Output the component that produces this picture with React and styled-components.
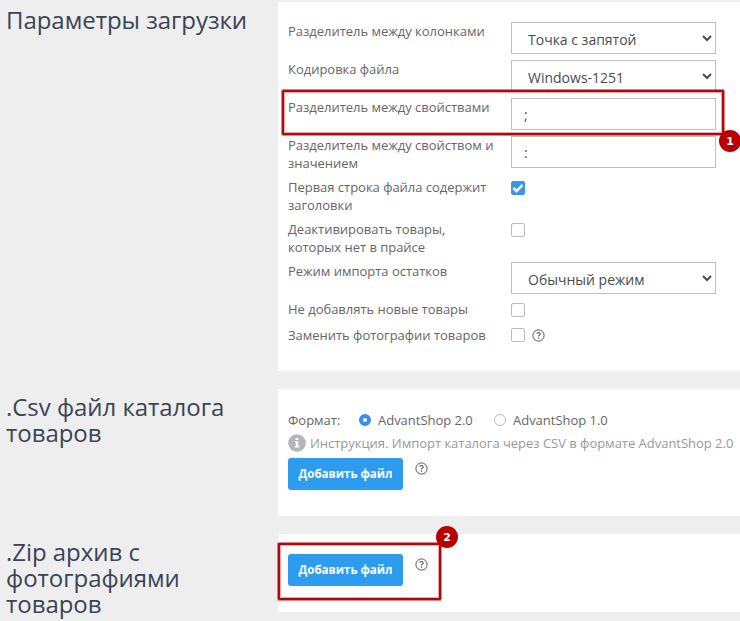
import React from 'react';
import styled, { createGlobalStyle } from 'styled-components';

const GlobalStyle = createGlobalStyle`
  *, *::before, *::after { box-sizing: border-box; }
  html, body { margin: 0; background: #eee; overflow: hidden; }
  body, input, select, button { font-family: 'Open Sans', 'Noto Sans', sans-serif; }
`;

const Page = styled.main`
  position: relative;
  width: 740px;
  height: 621px;
  padding-top: 2px;
  display: flex;
  flex-direction: column;
  gap: 18px;
  overflow: hidden;
  background: #eee;
  color: #666;
  font-size: 13px;
  line-height: 18px;
  letter-spacing: -0.02px;
`;

const Section = styled.section`
  flex: none;
  display: grid;
  grid-template-columns: 278px 462px;
  grid-template-rows: 100%;
  height: ${(p) => p.$height}px;
`;

const Title = styled.h2`
  margin: 0;
  padding: 5px 30px 0 6px;
  color: #3a4456;
  font-size: 24px;
  font-weight: 400;
  line-height: 26px;
  letter-spacing: -0.04px;
`;

const Panel = styled.div`
  padding: 20px 0 0 10px;
  background: #fff;
`;

const Row = styled.div`
  display: grid;
  grid-template-columns: 223px 205px;
  height: ${(p) => p.$height}px;
`;

const Label = styled.label`
  width: 210px;
`;

const Select = styled.select`
  width: 205px;
  height: 32px;
  padding: 3px 0 0 12px;
  border: 1px solid #bfbfbf;
  border-radius: 0;
  background-color: #fff;
  color: #484c51;
  font-size: 14px;
`;

const TextInput = styled.input`
  width: 205px;
  height: 32px;
  padding: 1px 12px 0;
  border: 1px solid #bfbfbf;
  background: #fff;
  color: #484c51;
  font-size: 14px;
`;

const CheckCell = styled.div`
  display: flex;
  align-items: flex-start;
  gap: 7px;
  padding-top: ${(p) => p.$top ?? 3}px;
`;

const Box = styled.span`
  display: flex;
  width: 14px;
  height: 14px;
  border: 1px solid ${(p) => (p.$on ? '#3b95ee' : '#bbb')};
  border-radius: 2px;
  background: ${(p) => (p.$on ? '#3b95ee' : '#fff')};
`;

const FormatRow = styled.div`
  display: flex;
  align-items: center;
  height: 20px;
  margin-top: 1px;
`;

const FormatName = styled.span`
  width: 71px;
`;

const Option = styled.label`
  display: flex;
  align-items: center;
  gap: 7px;
  width: 135px;
  white-space: nowrap;
`;

const Radio = styled.span`
  width: 12px;
  height: 12px;
  border: ${(p) => (p.$on ? '4px solid #3b8eed' : '1px solid #bbb')};
  border-radius: 50%;
  background: #fff;
`;

const Instruction = styled.div`
  display: flex;
  align-items: center;
  gap: 4px;
  height: 18px;
  margin: 4px 0 6px;
  color: #999;
  white-space: nowrap;
`;

const Actions = styled.div`
  display: flex;
  align-items: flex-start;
  gap: 12px;
`;

const HelpSlot = styled.span`
  display: flex;
  padding-top: ${(p) => p.$top ?? 0}px;
`;

const UploadButton = styled.button`
  width: 115px;
  height: 32px;
  padding: 0 0 1px;
  border: 0;
  border-radius: 3px;
  background: #2d9cee;
  color: #fff;
  font-size: 11.5px;
  font-weight: 700;
  white-space: nowrap;
`;

const Highlight = styled.div`
  position: absolute;
  left: ${(p) => p.$x}px;
  top: ${(p) => p.$y}px;
  width: ${(p) => p.$w}px;
  height: ${(p) => p.$h}px;
  border: 2px solid #a80c0c;
  border-radius: 1px;
  box-shadow: 0 0 0 1px rgba(205, 30, 30, 0.55), inset 0 0 0 1px rgba(205, 30, 30, 0.4);
`;

const Marker = styled.span`
  position: absolute;
  left: ${(p) => p.$x}px;
  top: ${(p) => p.$y}px;
  width: 22px;
  height: 22px;
  border-radius: 50%;
  background: #b90000;
  color: #fff;
  font: 700 11px/23px 'DejaVu Sans', sans-serif;
  text-align: center;
`;

function Help() {
  return (
    <svg width="13" height="13" viewBox="0 0 13 13" fill="none" stroke="#555">
      <circle cx="6.5" cy="6.5" r="5.6" strokeWidth="1" />
      <path d="M4.9 5.1c0-1 .6-1.6 1.6-1.6s1.7.6 1.7 1.4c0 1.1-1.6 1.2-1.6 2.7" strokeWidth="1.1" />
      <path d="M6.6 8.5v1.2" strokeWidth="1.2" />
    </svg>
  );
}

function Info() {
  return (
    <svg width="18" height="18" viewBox="0 0 18 18">
      <circle cx="9" cy="9" r="8.8" fill="#b3b6b9" />
      <path d="M7.6 4h2.7v2H7.6zM6.9 7.2h3.4v5h1v1.4H6.8v-1.4h1V8.6h-.9z" fill="#fff" />
    </svg>
  );
}

function Checkbox({ checked }) {
  return (
    <Box $on={checked} role="checkbox" aria-checked={!!checked}>
      {checked && (
        <svg width="12" height="12" viewBox="0 0 12 12" fill="none">
          <path d="M1.3 6l3.2 3 6.1-6.2" stroke="#fff" strokeWidth="2.4" />
        </svg>
      )}
    </Box>
  );
}

function SelectRow({ label, value }) {
  return (
    <Row $height={38}>
      <Label>{label}</Label>
      <Select defaultValue={value} aria-label={label}>
        <option>{value}</option>
      </Select>
    </Row>
  );
}

function InputRow({ label, value, height }) {
  return (
    <Row $height={height}>
      <Label>{label}</Label>
      <TextInput defaultValue={value} aria-label={label} />
    </Row>
  );
}

function CheckRow({ label, checked, height, top, children }) {
  return (
    <Row $height={height}>
      <Label>{label}</Label>
      <CheckCell $top={top}>
        <Checkbox checked={checked} />
        {children}
      </CheckCell>
    </Row>
  );
}

export default function App() {
  return (
    <>
      <GlobalStyle />
      <Page>
        <Section $height={369}>
          <Title>Параметры загрузки</Title>
          <Panel>
            <SelectRow label="Разделитель между колонками" value="Точка с запятой" />
            <SelectRow label="Кодировка файла" value="Windows-1251" />
            <InputRow label="Разделитель между свойствами" value=";" height={38} />
            <InputRow label="Разделитель между свойством и значением" value=":" height={42} />
            <CheckRow label="Первая строка файла содержит заголовки" checked height={42} />
            <CheckRow label="Деактивировать товары, которых нет в прайсе" height={42} />
            <SelectRow label="Режим импорта остатков" value="Обычный режим" />
            <CheckRow label="Не добавлять новые товары" height={26} />
            <CheckRow label="Заменить фотографии товаров" height={26} top={2}>
              <HelpSlot $top={1}><Help /></HelpSlot>
            </CheckRow>
          </Panel>
        </Section>

        <Section $height={127}>
          <Title>.Csv файл каталога товаров</Title>
          <Panel>
            <FormatRow>
              <FormatName>Формат:</FormatName>
              <Option><Radio $on />AdvantShop 2.0</Option>
              <Option><Radio />AdvantShop 1.0</Option>
            </FormatRow>
            <Instruction>
              <Info />
              <span>Инструкция. Импорт каталога через CSV в формате AdvantShop 2.0</span>
            </Instruction>
            <Actions>
              <UploadButton>Добавить файл</UploadButton>
              <HelpSlot $top={4}><Help /></HelpSlot>
            </Actions>
          </Panel>
        </Section>

        <Section $height={78}>
          <Title>.Zip архив с фотографиями товаров</Title>
          <Panel>
            <Actions>
              <UploadButton>Добавить файл</UploadButton>
              <HelpSlot $top={4}><Help /></HelpSlot>
            </Actions>
          </Panel>
        </Section>

        <Highlight $x={282} $y={90} $w={442} $h={45} />
        <Marker $x={719} $y={130}>1</Marker>
        <Highlight $x={278} $y={543} $w={163} $h={57} />
        <Marker $x={436} $y={526}>2</Marker>
      </Page>
    </>
  );
}
